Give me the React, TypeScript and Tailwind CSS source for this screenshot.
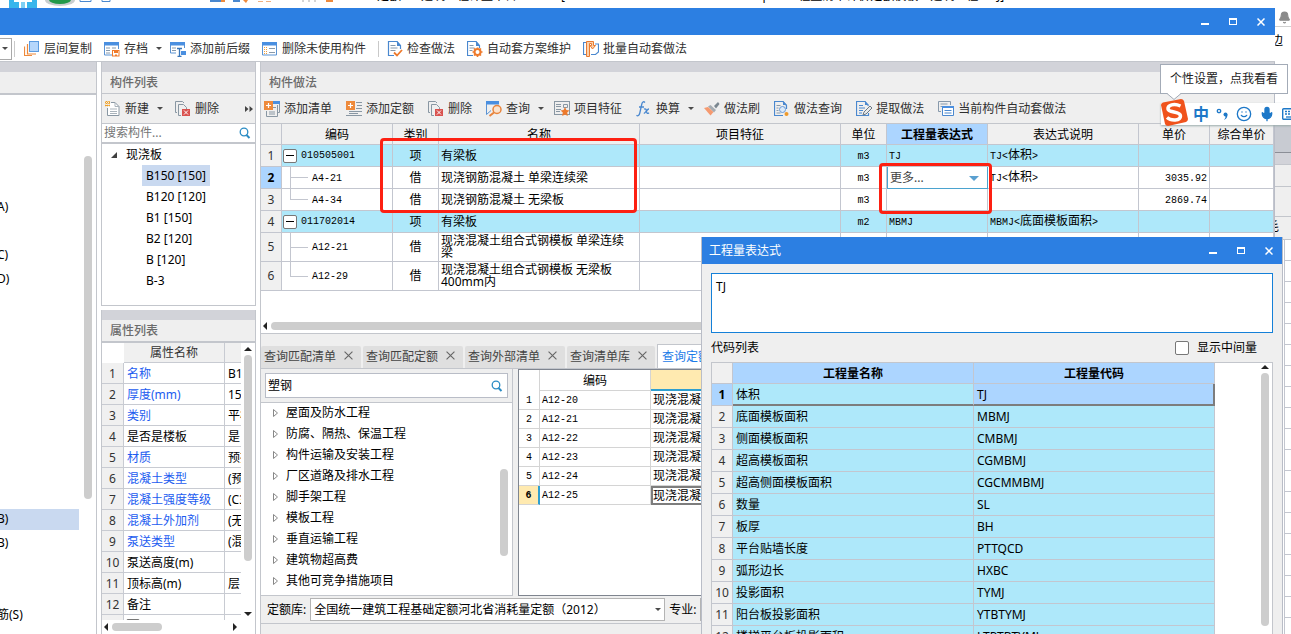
import { useState } from "react";
import type { ReactNode } from "react";
import { Bell, Mic, Smile } from "lucide-react";

const outlineRows = ["", "", "A)", "", "C)", "D)", "", "", "", "", "", "", "", "", "", "B)", "B)", "", "", "筋(S)"];

const members = ["B150 [150]", "B120 [120]", "B1 [150]", "B2 [120]", "B [120]", "B-3"];

const properties = [
  { name: "名称", value: "B1", link: true },
  { name: "厚度(mm)", value: "15", link: true },
  { name: "类别", value: "平板", link: true },
  { name: "是否是楼板", value: "是", link: false },
  { name: "材质", value: "预拌", link: true },
  { name: "混凝土类型", value: "(预", link: true },
  { name: "混凝土强度等级", value: "(C3", link: true },
  { name: "混凝土外加剂", value: "(无", link: true },
  { name: "泵送类型", value: "(混", link: true },
  { name: "泵送高度(m)", value: "", link: false },
  { name: "顶标高(m)", value: "层", link: false },
  { name: "备注", value: "", link: false },
];

const methods = [
  { code: "010505001", kind: "项", name: "有梁板", unit: "m3", expr: "TJ", note: ["TJ", "体积"], price: "", group: true },
  { code: "A4-21", kind: "借", name: "现浇钢筋混凝土 单梁连续梁", unit: "m3", expr: "", note: ["TJ", "体积"], price: "3035.92", group: false },
  { code: "A4-34", kind: "借", name: "现浇钢筋混凝土 无梁板", unit: "m3", expr: "", note: [], price: "2869.74", group: false, last: true },
  { code: "011702014", kind: "项", name: "有梁板", unit: "m2", expr: "MBMJ", note: ["MBMJ", "底面模板面积"], price: "", group: true },
  { code: "A12-21", kind: "借", name: "现浇混凝土组合式钢模板 单梁连续梁", unit: "", expr: "", note: [], price: "", group: false, tall: true },
  { code: "A12-29", kind: "借", name: "现浇混凝土组合式钢模板 无梁板 400mm内", unit: "", expr: "", note: [], price: "", group: false, tall: true, last: true },
];

const chapters = [
  "屋面及防水工程",
  "防腐、隔热、保温工程",
  "构件运输及安装工程",
  "厂区道路及排水工程",
  "脚手架工程",
  "模板工程",
  "垂直运输工程",
  "建筑物超高费",
  "其他可竞争措施项目",
];

const quotas = ["A12-20", "A12-21", "A12-22", "A12-23", "A12-24", "A12-25"];

const tabs = ["查询匹配清单", "查询匹配定额", "查询外部清单", "查询清单库"];

const codes = [
  ["体积", "TJ"],
  ["底面模板面积", "MBMJ"],
  ["侧面模板面积", "CMBMJ"],
  ["超高模板面积", "CGMBMJ"],
  ["超高侧面模板面积", "CGCMMBMJ"],
  ["数量", "SL"],
  ["板厚", "BH"],
  ["平台贴墙长度", "PTTQCD"],
  ["弧形边长", "HXBC"],
  ["投影面积", "TYMJ"],
  ["阳台板投影面积", "YTBTYMJ"],
  ["楼梯平台板投影面积", "LTPTBTYMJ"],
];

function Svg({ children }: { children: ReactNode }) {
  return (
    <svg width="16" height="16" viewBox="0 0 16 16" fill="none" className="shrink-0" aria-hidden>
      {children}
    </svg>
  );
}

const icons = {
  copy: (
    <Svg>
      <rect x="5.5" y=".5" width="9" height="10" fill="#b5d6fb" stroke="#5b9be0" />
      <path d="M3.5 3v10H12M.5 5.500v9H8" stroke="#ee8a3c" strokeWidth="1.200" />
    </Svg>
  ),
  archive: (
    <Svg>
      <path d="M.5 1v13H9M14.500 1v7" stroke="#5b93d3" />
      <path d="M0 1h15v3.500H0z" fill="#4a8fe0" />
      <path d="M2 7h4M2 9.500h4M2 12h4M8 7h4" stroke="#8799ab" />
      <rect x="8.500" y="9.500" width="6.500" height="5.500" fill="#fff" stroke="#f07a2a" />
      <path d="M10 10h4v2h-4zM11 13.500h2V15h-2z" fill="#f07a2a" />
    </Svg>
  ),
  affix: (
    <Svg>
      <path d="M.5 1v11H6M14.500 1v6" stroke="#5b93d3" />
      <path d="M0 1h15v3.500H0zM11 10h5v4h-5z" fill="#4a8fe0" />
      <path d="M2 7h4M2 9.500h4" stroke="#8799ab" />
      <path d="M7 7.500h5M9.500 7.500v8M7.500 15.500h4" stroke="#3975b8" strokeWidth="1.300" />
    </Svg>
  ),
  unused: (
    <Svg>
      <path d="M.5 2v12h14V2" stroke="#5b93d3" />
      <path d="M0 1h15v3.500H0z" fill="#4a8fe0" />
      <path d="M2.500 6v7M4.500 6v7" stroke="#f0a040" strokeDasharray="1 1" />
      <path d="M7 7.500h6M7 11.500h6" stroke="#8799ab" />
    </Svg>
  ),
  check: (
    <Svg>
      <path d="M13.500 8V4.500L10 .5H1.500v14H7" stroke="#4a88cf" strokeWidth="1.200" />
      <path d="M10 0v5h4z" fill="#4a88cf" />
      <path d="M3.500 4.500h5M3.500 7h7M3.500 9.500h5" stroke="#8799ab" />
      <path d="M7 11.500l3 3 5-5.500" stroke="#ee7a2c" strokeWidth="1.800" />
    </Svg>
  ),
  plan: (
    <Svg>
      <path d="M12.500 7V4.500L9 .5H.5v14H6" stroke="#4a88cf" strokeWidth="1.200" />
      <path d="M9 0v5h4z" fill="#4a88cf" />
      <path d="M2.500 4.500h4M2.500 7h5M2.500 9.500h3" stroke="#8799ab" />
      <circle cx="10.500" cy="11" r="3" stroke="#ee7a2c" strokeWidth="2" />
      <path d="M10.500 6.500v1M10.500 14.500v1.500M5.500 11h1.500M14 11h1.500M7 7.500l1 1M13 13.500l1 1M14 7.500l-1 1M8 13.500l-1 1" stroke="#ee7a2c" strokeWidth="1.600" />
    </Svg>
  ),
  batch: (
    <Svg>
      <path d="M4 1.500H.5v12H3M12 3h3.500v8L12.500 13.500H8" stroke="#4a88cf" strokeWidth="1.200" />
      <path d="M3.500.500h7v4h2L9.500 8 7 4.500h1.500v-2h-2v13h-3z" fill="#f9d0ad" stroke="#e97a30" />
    </Svg>
  ),
  create: (
    <Svg>
      <path d="M6 1.500h4l4 4v9H2.500V7" fill="#fff" stroke="#8997a3" />
      <path d="M10 1.500v4h4M5 8h7M5 10.500h7M5 12.500h7" stroke="#a9b3bb" />
      <path d="M0 1.500h5M0 4.500h5M1.500 0v6M4 0v6" stroke="#f0a024" strokeDasharray="1 1" strokeWidth="1.400" />
    </Svg>
  ),
  remove: (
    <Svg>
      <path d="M2 11.500H.5V.5h7L9 2M6 14.500H3.500v-11h5l3 3V8" stroke="#8997a3" />
      <rect x="7" y="8" width="8" height="7" fill="#d9524f" />
      <path d="M9 9.500l4 4M13 9.500l-4 4" stroke="#fff" />
    </Svg>
  ),
  addList: (
    <Svg>
      <path d="M9 1h6.500v10.500H14M13.500 4v11.500h-11V10" stroke="#8997a3" />
      <path d="M9 0h7v3H9z" fill="#4a8fe0" />
      <path d="M9 6.500h3M5 11h6M5 13h6" stroke="#8997a3" />
      <path d="M0 0h9v9H0z" fill="#ee8a3c" />
      <path d="M4.500 2v5M2 4.500h5" stroke="#fff" strokeWidth="1.200" />
    </Svg>
  ),
  addQuota: (
    <Svg>
      <path d="M10 1.500h6M11 4.500h5M10 7.500h6M3 10.500h13M3 12.500h9M0 14.500h16" stroke="#8997a3" />
      <path d="M0 0h9v9H0z" fill="#ee8a3c" />
      <path d="M4.500 2v5M2 4.500h5" stroke="#fff" strokeWidth="1.200" />
    </Svg>
  ),
  query: (
    <Svg>
      <path d="M.5 1v12.500L5 9.500" stroke="#5b93d3" />
      <path d="M0 0h13v3.500H0z" fill="#4a8fe0" />
      <circle cx="11" cy="8.500" r="4" fill="#fbe3cd" stroke="#e8843c" strokeWidth="1.500" />
      <path d="M8 11.500L3.500 15" stroke="#e8843c" strokeWidth="2" />
    </Svg>
  ),
  feature: (
    <Svg>
      <rect x=".5" y=".5" width="15" height="13" stroke="#8997a3" />
      <path d="M2 3.500h5M2 5.500h5M2 8.500h5M2 10.500h4M9.500 3.500h4v3h-4z" stroke="#8997a3" />
      <path d="M11 6l1.400 3 3.100.400-2.300 2.200.600 3.300-2.800-1.500-2.800 1.500.600-3.300-2.300-2.200L9.600 9z" fill="#ee7a2c" />
    </Svg>
  ),
  fx: (
    <Svg>
      <path
        d="M9 1.500C7.500 0 6.200 1 5.700 3.500L3.800 12c-.5 2.500-2 3.500-3.300 2.300M3 6h5M8 8.200c2-1 2.200.5 2.500 2.200s.8 2.800 2.500 1.300M13 8c-1.800-.2-3.200 3.800-5.200 4.500"
        stroke="#4a88cf"
        strokeWidth="1.300"
      />
    </Svg>
  ),
  brush: (
    <Svg>
      <path d="M6.500 4l5.500 5-2 2.500-6-6z" fill="#a5acb2" />
      <path d="M10 5l4-4 1.500 2L12 7.500z" fill="#7b8790" />
      <path d="M4 6l5.500 5-3 3.500L0 7z" fill="#f59a70" />
    </Svg>
  ),
  methodQuery: (
    <Svg>
      <path d="M12.500 8V4.500L9 .5H.5v14H9" stroke="#4a88cf" strokeWidth="1.200" />
      <path d="M9 0v4h4z" fill="#4a88cf" />
      <path d="M2.500 4.500h4M2.500 7h2M2.500 9.500h2M2.500 12h4" stroke="#8799ab" />
      <circle cx="8.500" cy="8.500" r="3" fill="#dbeafa" stroke="#6798d4" />
      <circle cx="12.500" cy="13" r="2" fill="#ee9a2c" />
    </Svg>
  ),
  extract: (
    <Svg>
      <path d="M12.500 5L9 .5H.5v14H12.500V12" stroke="#4a88cf" strokeWidth="1.200" />
      <path d="M9 0v4h4z" fill="#4a88cf" />
      <path d="M3 4.500h4M3 7h6M3 9.500h4M3 12h3" stroke="#4a88cf" />
      <path d="M14 5l2 2-6 6-3 1 1-3z" fill="#e8eaec" stroke="#6d7a85" />
    </Svg>
  ),
  current: (
    <Svg>
      <path d="M3 10.500H.5V.5h12V4M2.500 3h7M2.500 5.500H4" stroke="#8799ab" />
      <path d="M4.500 5.500h11v9h-11z" fill="#fff" stroke="#4a88cf" />
      <path d="M4 5h12v2H4z" fill="#4a8fe0" />
      <path d="M6.500 9.500h7M6.500 12h7" stroke="#4a88cf" />
    </Svg>
  ),
};

type IconName = keyof typeof icons;

function Arrow() {
  return <span className="-mr-1 ml-1 h-0 w-1.5 border-x-3 border-t-3 border-x-transparent border-t-[#4a4a4a]" />;
}

function ToolButton({ icon, label, menu }: { icon: IconName; label: string; menu?: boolean }) {
  return (
    <button type="button" className="flex shrink-0 items-center gap-1 whitespace-nowrap text-[#2f2f2f]">
      {icons[icon]}
      {label}
      {menu && <Arrow />}
    </button>
  );
}

function WindowButtons() {
  return (
    <div className="flex items-center gap-4 pr-2 text-white">
      <button type="button" aria-label="最小化" className="flex h-3 w-3 items-center justify-center">
        <span className="mt-1 h-0.5 w-2 bg-white" />
      </button>
      <button type="button" aria-label="最大化" className="flex h-3 w-3 items-center justify-center">
        <span className="h-[7px] w-2 border border-t-2 border-white" />
      </button>
      <button type="button" aria-label="关闭" className="flex h-3 w-3 items-center justify-center">
        <svg width="8" height="8" viewBox="0 0 8 8" aria-hidden>
          <path d="M.5.5l7 7M7.500.5l-7 7" stroke="#fff" strokeWidth="1.500" />
        </svg>
      </button>
    </div>
  );
}

function PanelHead({ title }: { title: string }) {
  return (
    <>
      <div className="h-2.5 shrink-0 bg-[#d2d3d9]" />
      <h2 className="flex h-[22px] shrink-0 items-center border-b border-[#c3c6cc] bg-[#efefef] pl-2 font-medium text-[#6b6b6b]">
        {title}
      </h2>
    </>
  );
}

function SearchIcon() {
  return (
    <svg width="12" height="12" viewBox="0 0 12 12" fill="none" aria-hidden className="shrink-0">
      <circle cx="5" cy="5" r="3.800" stroke="#2b8cc4" strokeWidth="1.300" />
      <path d="M7.500 8l3 3" stroke="#2b8cc4" strokeWidth="2" />
    </svg>
  );
}

const Mono = ({ children }: { children: ReactNode }) => (
  <span className="font-['Liberation_Mono',monospace] text-[10px]">{children}</span>
);

function OutlinePane() {
  return (
    <aside className="flex w-[97px] shrink-0 flex-col border-r border-[#c3c6cc] bg-white">
      <div className="h-2.5 shrink-0 bg-[#d2d3d9]" />
      <div className="h-[23px] shrink-0 border-b-2 border-[#c3c6cc] bg-[#efefef]" />
      <div className="flex min-h-0 flex-1 justify-between pr-1">
        <ul className="w-[79px] pt-[52px]">
          {outlineRows.map((row, i) => (
            <li key={i} className="flex h-6 items-center">
              <span className={i === 15 ? "flex h-[21px] w-full items-center bg-[#c9d9f0]" : "flex h-[21px] w-full items-center"}>
                <span className="-ml-[3px]">{row}</span>
              </span>
            </li>
          ))}
        </ul>
        <div className="mt-[61px] h-[343px] w-2 rounded-full bg-[#cdcdcd]" />
      </div>
    </aside>
  );
}

function MemberPanel() {
  return (
    <section className="flex h-[244px] shrink-0 flex-col border border-t-0 border-[#c3c6cc] bg-white">
      <PanelHead title="构件列表" />
      <div className="flex h-[30px] shrink-0 items-center gap-4 border-b border-[#c3c6cc] bg-[#efefef] pr-1 pl-[3px]">
        <ToolButton icon="create" label="新建" menu />
        <ToolButton icon="remove" label="删除" />
        <button type="button" aria-label="更多" className="-mr-0.5 ml-auto">
          <svg width="8" height="6" viewBox="0 0 8 6" fill="#444" aria-hidden>
            <path d="M0 0l3.500 3L0 6zM4.500 0L8 3 4.500 6z" />
          </svg>
        </button>
      </div>
      <label className="flex h-5 shrink-0 items-center border-b-2 border-[#c3c6cc] pr-1 pl-0.5">
        <input aria-label="搜索构件" placeholder="搜索构件..." className="min-w-0 flex-1 outline-none placeholder:text-[#757575]" />
        <SearchIcon />
      </label>
      <div className="flex h-[21px] items-center gap-2 pl-2">
        <svg width="8" height="8" viewBox="0 0 8 8" aria-hidden>
          <path d="M7 1v6H1z" fill="#404040" />
        </svg>
        现浇板
      </div>
      <ul className="pl-10">
        {members.map((member, i) => (
          <li key={member} className="flex h-[21px]">
            <button type="button" className={i === 0 ? "bg-[#c9d9f0] px-1" : "px-1"}>
              {member}
            </button>
          </li>
        ))}
      </ul>
    </section>
  );
}

function PropertyPanel() {
  return (
    <section className="flex min-h-0 flex-1 flex-col border-x border-[#c3c6cc] bg-white">
      <PanelHead title="属性列表" />
      <div className="flex min-h-0 flex-1 border-t border-[#c3c6cc]">
        <div className="min-w-0 flex-1 overflow-hidden">
          <table className="w-full table-fixed border-separate border-spacing-0">
            <colgroup>
              <col className="w-[22px]" />
              <col className="w-[101px]" />
              <col />
            </colgroup>
            <thead>
              <tr className="h-5">
                <th className="p-0" />
                <th className="border-r border-b border-[#c8cbd2] bg-[#f0f0f0] p-0 pt-px font-normal text-[#333]">属性名称</th>
                <th className="border-b border-[#c8cbd2] bg-[#f0f0f0] p-0" />
              </tr>
            </thead>
            <tbody>
              {properties.map((row, i) => (
                <tr key={row.name} className="h-[21px]">
                  <th className="border-r border-b border-[#c8cbd2] bg-[#f0f0f0] p-0 pt-px font-normal text-[#333]">{i + 1}</th>
                  <td
                    className={
                      row.link
                        ? "border-r border-b border-[#c8cbd2] p-0 pt-px pl-[3px] whitespace-nowrap text-[#1c5cf0]"
                        : "border-r border-b border-[#c8cbd2] p-0 pt-px pl-[3px] whitespace-nowrap"
                    }
                  >
                    {row.name}
                  </td>
                  <td className="overflow-hidden border-b border-[#c8cbd2] p-0 pt-px pl-[3px] whitespace-nowrap">{row.value}</td>
                </tr>
              ))}
              <tr className="h-[21px]">
                <th className="border-r border-[#c8cbd2] bg-[#f0f0f0] p-0" />
                <td className="border-r border-[#c8cbd2] p-0 pl-0.5">
                  <button type="button" aria-label="展开" className="block h-3.5 w-3.5 rounded-xs border border-[#777] bg-white" />
                </td>
                <td className="p-0" />
              </tr>
            </tbody>
          </table>
        </div>
        <div className="flex w-3.5 flex-col items-center py-1">
          <span className="h-0 w-0 border-x-4 border-b-4 border-x-transparent border-b-[#222]" />
          <span className="mt-1 h-[206px] w-2 rounded-full bg-[#cdcdcd]" />
          <span className="mt-auto h-0 w-0 border-x-4 border-t-4 border-x-transparent border-t-[#222]" />
        </div>
      </div>
      <div className="flex h-[14px] shrink-0 items-center px-0.5">
        <span className="h-0 w-0 border-y-4 border-r-4 border-y-transparent border-r-[#222]" />
        <span className="ml-1 h-2 w-[50px] rounded-full bg-[#cdcdcd]" />
        <span className="mr-4 ml-auto h-0 w-0 border-y-4 border-l-4 border-y-transparent border-l-[#222]" />
      </div>
    </section>
  );
}

const cell = "border-r border-b border-[#c3c6cf] p-0";

function MethodTable() {
  const headers = ["编码", "类别", "名称", "项目特征", "单位", "工程量表达式", "表达式说明", "单价", "综合单价"];
  return (
    <div className="relative h-[210px] shrink-0 border-b border-[#c3c6cc] bg-white">
      <table className="w-full table-fixed border-separate border-spacing-0">
        <colgroup>
          <col className="w-[21px]" />
          <col className="w-[111px]" />
          <col className="w-[46px]" />
          <col className="w-[201px]" />
          <col className="w-[201px]" />
          <col className="w-[46px]" />
          <col className="w-[101px]" />
          <col className="w-[151px]" />
          <col className="w-[71px]" />
          <col />
        </colgroup>
        <thead>
          <tr className="h-[21px] bg-[#f0f0f0]">
            <th className={cell} />
            {headers.map((header) => (
              <th
                key={header}
                className={
                  header === "工程量表达式"
                    ? "border-r border-b border-[#c3c6cf] bg-[#acd5ff] p-0 pt-px font-bold"
                    : "border-r border-b border-[#c3c6cf] p-0 pt-px font-normal whitespace-nowrap"
                }
              >
                {header}
              </th>
            ))}
          </tr>
        </thead>
        <tbody>
          {methods.map((row, i) => (
            <tr key={row.code} className={row.tall ? "h-[29px]" : row.group ? "h-[22px] bg-[#aee8fa]" : "h-[22px]"}>
              <th
                className={
                  i === 1
                    ? "border-r border-b border-[#c3c6cf] bg-[#acd5ff] p-0 font-bold"
                    : "border-r border-b border-[#c3c6cf] bg-[#f0f0f0] p-0 font-normal text-[#333]"
                }
              >
                {i + 1}
              </th>
              <td className={cell}>
                {row.group ? (
                  <div className="flex items-center gap-1 pl-px">
                    <button
                      type="button"
                      aria-label="折叠"
                      className="flex h-3.5 w-3.5 items-center justify-center rounded-xs border border-[#777] bg-white"
                    >
                      <span className="h-px w-2 bg-black" />
                    </button>
                    <Mono>{row.code}</Mono>
                  </div>
                ) : (
                  <div className="flex items-center pl-2">
                    <span className={row.tall ? "flex h-7 w-[18px] flex-col" : "flex h-[21px] w-[18px] flex-col"}>
                      <span className="flex-1 border-b border-l border-[#c3c6cf]" />
                      <span className={row.last ? "flex-1" : "flex-1 border-l border-[#c3c6cf]"} />
                    </span>
                    <span className="ml-1 leading-3">
                      <Mono>{row.code}</Mono>
                    </span>
                  </div>
                )}
              </td>
              <td className="border-r border-b border-[#c3c6cf] p-0 text-center">{row.kind}</td>
              <td className="border-r border-b border-[#c3c6cf] p-0 pr-2.5 pl-0.5 leading-3">{row.name}</td>
              <td className={cell} />
              <td className="border-r border-b border-[#c3c6cf] p-0 text-center">
                <Mono>{row.unit}</Mono>
              </td>
              {i === 1 ? (
                <td className="border border-t-0 border-[#4ba3cf] p-0">
                  <div className="relative">
                    <select aria-label="工程量表达式" className="block h-5 w-full appearance-none pl-0.5 text-[#444] outline-none">
                      <option>更多...</option>
                    </select>
                    <span className="pointer-events-none absolute top-2 right-2 border-x-5 border-t-5 border-x-transparent border-t-[#5aa0d0]" />
                  </div>
                </td>
              ) : (
                <td className="border-r border-b border-[#c3c6cf] p-0 pl-0.5">
                  <Mono>{row.expr}</Mono>
                </td>
              )}
              <td className="border-r border-b border-[#c3c6cf] p-0 pl-0.5 whitespace-nowrap">
                {row.note.length > 0 && (
                  <>
                    <Mono>{row.note[0]}&lt;</Mono>
                    {row.note[1]}
                    <Mono>&gt;</Mono>
                  </>
                )}
              </td>
              <td className="border-r border-b border-[#c3c6cf] p-0 pr-0.5 text-right">
                <Mono>{row.price}</Mono>
              </td>
              <td className={cell} />
            </tr>
          ))}
        </tbody>
      </table>
      <div className="absolute inset-x-0 bottom-0 flex h-3.5 items-center gap-1 pl-0.5">
        <span className="border-y-4 border-r-4 border-y-transparent border-r-[#222]" />
        <span className="h-2 flex-1 rounded-full bg-[#cdcdcd]" />
      </div>
      <div className="absolute top-3.5 left-[119px] h-[75px] w-[257px] rounded-sm border-3 border-[#fd2012]" />
      <div className="absolute top-[39px] left-[618px] h-[51px] w-[113px] rounded-sm border-3 border-[#fd2012]" />
    </div>
  );
}

function QueryArea() {
  const [keyword, setKeyword] = useState("塑钢");

  return (
    <section className="flex min-h-0 flex-1 flex-col bg-[#efefef] pt-2.5">
      <div className="flex h-[25px] shrink-0 items-end gap-0.5 overflow-hidden border-b border-[#c3c6cc]">
        {tabs.map((tab) => (
          <div key={tab} className="flex h-[22px] shrink-0 items-center gap-2 rounded-t-xs bg-[#dfdfdf] pr-2 pl-[3px] text-[#444]">
            <button type="button" className="whitespace-nowrap">
              {tab}
            </button>
            <button type="button" aria-label={`关闭${tab}`} className="mb-1">
              <svg width="9" height="9" viewBox="0 0 8 8" aria-hidden>
                <path d="M.5.5l7 7M7.500.5l-7 7" stroke="#666" />
              </svg>
            </button>
          </div>
        ))}
        <button type="button" className="h-6 shrink-0 border border-b-0 border-[#c3c6cc] bg-white px-1 text-[#1b7be8]">
          查询定额
        </button>
      </div>
      <div className="flex h-[227px] shrink-0 gap-[5px]">
        <div className="flex w-[252px] shrink-0 flex-col border-r border-b border-[#c3c6cc]">
          <label className="m-1 flex h-[25px] shrink-0 items-center border border-[#b9bdc7] bg-white pr-1 pl-0.5">
            <input
              aria-label="查询定额"
              value={keyword}
              onChange={(event) => setKeyword(event.target.value)}
              className="min-w-0 flex-1 outline-none"
            />
            <SearchIcon />
          </label>
          <div className="flex min-h-0 flex-1 justify-between border-t border-[#c3c6cc] bg-white pr-1">
            <ul className="-mt-px">
              {chapters.map((chapter) => (
                <li key={chapter} className="flex h-[21px] items-center gap-2 pl-3">
                  <svg width="5" height="8" viewBox="0 0 5 8" fill="none" aria-hidden>
                    <path d="M.5.5v7L4.500 4z" stroke="#888" />
                  </svg>
                  {chapter}
                </li>
              ))}
            </ul>
            <div className="mt-[66px] h-[87px] w-2 rounded-full bg-[#cdcdcd]" />
          </div>
        </div>
        <div className="min-w-0 flex-1 border border-[#7f858f] bg-white">
          <table className="w-full table-fixed border-separate border-spacing-0">
            <colgroup>
              <col className="w-[21px]" />
              <col className="w-[111px]" />
              <col />
            </colgroup>
            <thead>
              <tr className="h-[21px]">
                <th className="border-r border-[#d4d4d4] p-0" />
                <th className="border-r border-b border-[#d4d4d4] p-0 pt-px font-normal">编码</th>
                <th className="border-b-2 border-[#2f9fd0] bg-[#ffeab0] p-0" />
              </tr>
            </thead>
            <tbody>
              {quotas.map((quota, i) => (
                <tr key={quota} className="h-[19px]">
                  <th
                    className={
                      i === 5
                        ? "border-r-2 border-b border-r-[#2f9fd0] border-b-[#d4d4d4] bg-[#ffeab0] p-0 font-bold leading-4"
                        : "border-r border-b border-[#d4d4d4] p-0 font-normal leading-4"
                    }
                  >
                    <Mono>{i + 1}</Mono>
                  </th>
                  <td className="border-r border-b border-[#d4d4d4] p-0 pl-0.5 leading-4">
                    <Mono>{quota}</Mono>
                  </td>
                  <td
                    className={
                      i === 5
                        ? "border-2 border-[#7d7d7d] p-0 leading-[15px]"
                        : "border-b border-[#d4d4d4] p-0 pl-0.5 leading-4"
                    }
                  >
                    现浇混凝
                  </td>
                </tr>
              ))}
            </tbody>
          </table>
        </div>
      </div>
      <div className="flex h-7 shrink-0 items-center gap-1 border-b border-[#c3c6cc] pl-1.5">
        <label htmlFor="quota-library">定额库:</label>
        <div className="relative">
          <select
            id="quota-library"
            className="block h-[23px] w-[355px] appearance-none border border-[#b4b4b4] bg-white pl-[3px] outline-none"
          >
            <option>全国统一建筑工程基础定额河北省消耗量定额（2012）</option>
          </select>
          <span className="pointer-events-none absolute top-2.5 right-1 border-x-3 border-t-3 border-x-transparent border-t-[#4a4a4a]" />
        </div>
        <label htmlFor="major">专业:</label>
        <select id="major" className="h-[23px] w-40 appearance-none border border-[#b4b4b4] bg-white" />
      </div>
    </section>
  );
}

function ExpressionDialog() {
  const [expression, setExpression] = useState("TJ");

  return (
    <div
      role="dialog"
      aria-label="工程量表达式"
      className="absolute top-[237px] right-2 bottom-0 flex w-[582px] flex-col overflow-hidden border-x border-[#b9bdc7] bg-[#efefef]"
    >
      <div className="-mx-px flex h-[27px] shrink-0 items-center justify-between bg-[#2c7fe2] pl-2 text-white">
        工程量表达式
        <WindowButtons />
      </div>
      <div className="flex min-h-0 flex-1 flex-col px-[9px] pt-[9px]">
        <textarea
          aria-label="表达式"
          value={expression}
          onChange={(event) => setExpression(event.target.value)}
          className="h-[60px] shrink-0 resize-none border border-[#1480d8] bg-white px-1 py-[3px] leading-5 outline-none"
        />
        <div className="flex h-[29px] shrink-0 items-center justify-between pr-4">
          <span>代码列表</span>
          <label className="flex items-center gap-2">
            <input type="checkbox" className="h-3.5 w-3.5 appearance-none rounded-xs border border-[#777] bg-white" />
            显示中间量
          </label>
        </div>
        <div className="flex min-h-0 flex-1 justify-between border border-b-0 border-[#c3c6cc] bg-white">
          <div className="overflow-hidden">
            <table className="w-[503px] table-fixed border-separate border-spacing-0">
              <colgroup>
                <col className="w-[21px]" />
                <col className="w-[241px]" />
                <col className="w-[241px]" />
              </colgroup>
              <thead>
                <tr className="h-[21px] bg-[#acd5ff]">
                  <th className="border-r border-b border-[#c3c6cf] bg-[#f0f0f0] p-0" />
                  <th className="border-r border-b border-[#c3c6cf] p-0 pt-px">工程量名称</th>
                  <th className="border-r border-b border-[#c3c6cf] p-0 pt-px">工程量代码</th>
                </tr>
              </thead>
              <tbody>
                {codes.map(([name, code], i) =>
                  i === 0 ? (
                    <tr key={code} className="h-[22px] bg-[#aee8fa]">
                      <th className="border-r border-b border-[#c3c6cf] bg-[#acd5ff] p-0 pt-px">1</th>
                      <td className="border-r border-b-2 border-r-[#c3c6cf] border-b-[#7d7d7d] p-0 pt-px pl-[3px]">{name}</td>
                      <td className="border-r-2 border-b-2 border-[#7d7d7d] bg-[#acd5ff] p-0 pt-px pl-[3px]">{code}</td>
                    </tr>
                  ) : (
                    <tr key={code} className="h-[22px] bg-[#aee8fa]">
                      <th className="border-r border-b border-[#c3c6cf] bg-[#f0f0f0] p-0 pt-px font-normal text-[#333]">{i + 1}</th>
                      <td className="border-r border-b border-[#c3c6cf] p-0 pl-[3px]">{name}</td>
                      <td className="border-r border-b border-[#c3c6cf] p-0 pl-[3px]">{code}</td>
                    </tr>
                  ),
                )}
              </tbody>
            </table>
          </div>
          <div className="flex w-3.5 flex-col items-center pt-0.5 pb-2">
            <span className="border-x-4 border-b-4 border-x-transparent border-b-[#222]" />
            <span className="mt-1 w-2 flex-1 rounded-full bg-[#cdcdcd]" />
          </div>
        </div>
      </div>
    </div>
  );
}

function InputMethodBar() {
  return (
    <>
      <div className="absolute top-[103px] right-0 flex h-[22px] w-[130px] items-center gap-[7px] overflow-hidden bg-white pl-8 text-[#1d78c8] shadow-[0_1px_2px_#9aa]">
        <span className="w-4 shrink-0 text-center text-base leading-5 font-bold">中</span>
        <svg width="13" height="14" viewBox="0 0 13 14" fill="none" className="shrink-0" aria-hidden>
          <circle cx="3" cy="4" r="1.700" stroke="#1d78c8" strokeWidth="1.300" />
          <circle cx="9.500" cy="7.500" r="2" fill="#1d78c8" />
          <path d="M11.500 7.500q0 4-3.500 5.500 2-2.500 1.500-4z" fill="#1d78c8" />
        </svg>
        <Smile size={16} className="shrink-0" />
        <Mic size={16} className="shrink-0 fill-[#1d78c8]" />
        <svg width="14" height="12" viewBox="0 0 14 12" fill="none" className="shrink-0" aria-hidden>
          <rect x=".7" y=".7" width="12.600" height="10.600" rx="1" stroke="#1d78c8" strokeWidth="1.400" />
          <path d="M3 3.500h8M3 6h8" stroke="#1d78c8" strokeWidth="1.300" strokeDasharray="2 1" />
          <path d="M4 9h6" stroke="#1d78c8" strokeWidth="1.300" />
        </svg>
      </div>
      <svg width="28" height="28" viewBox="0 0 28 28" className="absolute top-[98px] right-[103px]" aria-hidden>
        <path d="M1 7q0-2 2-2.500L21 1q2 0 3 2l4 18q0 2-2 3L8 28q-2 0-3-2z" fill="#f0531c" />
        <path d="M20.500 8C14 5 7.500 7 8 11s12.500 2 12.500 7S11 23 7 19.500" fill="none" stroke="#fff" strokeWidth="3.500" />
      </svg>
      <div className="absolute top-16 right-[3px] flex h-[30px] w-32 items-center justify-center border border-[#a3abb7] bg-white text-[#222]">
        个性设置，点我看看
        <svg width="14" height="8" viewBox="0 0 14 8" className="absolute top-7 left-1.5" aria-hidden>
          <path d="M0 0l7 6 7-6z" fill="#fff" />
          <path d="M0 .5l7 6 7-6" fill="none" stroke="#a3abb7" />
        </svg>
      </div>
    </>
  );
}

function BackdropEdge() {
  return (
    <div className="flex w-4 shrink-0 flex-col overflow-hidden bg-white">
      <div className="flex h-[19px] shrink-0 items-center justify-end border-b border-[#d0d0d0] text-[#8a8a8a]">
        <Bell size={13} className="shrink-0 fill-[#8a8a8a]" />
      </div>
      <div className="h-[30px] shrink-0 pt-1 leading-5">
        <span className="-ml-1">边</span>
      </div>
      <div className="h-[60px] shrink-0 bg-white" />
      <div className="h-9 shrink-0 border-b border-[#8b8e96] bg-[#c8cbd2]" />
      <div className="h-[11px] shrink-0 bg-[#d2d3d9]" />
      <div className="h-[23px] shrink-0 border-y border-[#c3c6cc] bg-[#efefef]" />
      <div className="h-[30px] shrink-0 border-b border-[#c3c6cc] bg-[#efefef]" />
      <div className="h-[23px] shrink-0 border-b border-[#c3c6cc] bg-[#efefef] leading-5">
        <span className="-ml-2">毛</span>
      </div>
      {Array.from({ length: 19 }, (_, i) => (
        <div key={i} className="ml-[9px] h-[21px] shrink-0 border-b border-l border-[#c3c6cf]" />
      ))}
    </div>
  );
}

function BackdropTop() {
  return (
    <div className="flex h-2 shrink-0 items-end overflow-hidden bg-white pl-[9px]">
      <svg width="340" height="8" viewBox="0 0 340 8" className="shrink-0" aria-hidden>
        <path d="M0 0h28v8H0z" fill="#38b5ec" />
        <path d="M5 0h18v2h-5v6h-8V2H5z" fill="#fff" />
        <path d="M12 2h4v6h-4z" fill="#7fd0f4" />
        <ellipse cx="51" cy="0" rx="15" ry="6" fill="#c9ced0" />
        <ellipse cx="51" cy="0" rx="11" ry="4" fill="#22994a" />
        <path d="M71 0v1.500h11V0M93 0v1.500h8V0" stroke="#4a88cf" fill="none" />
        <path d="M201 0h12v2h-12zM224 0h7v2h-7z" fill="#4a88cf" />
        <path d="M212 0h4v2h-4zM234 0h5l-2 3zM317 0h7v2h-7z" fill="#ee8a3c" />
        <path d="M249 1.500h5M257 1.500h5" stroke="#f0b080" />
        <path d="M294 0v2M300 0v2M306 0v2" stroke="#aaa" />
      </svg>
      <div className="flex shrink-0 gap-3 pb-1.5 pl-7 leading-none whitespace-nowrap">
        <span>定额</span>
        <span className="ml-2">建筑工程计量平台</span>
        <span className="ml-8">[C:\Users</span>
        <span>\Administrator</span>
        <span>\Desktop\</span>
        <span>工程量清单计价定额模板</span>
        <span>建筑工程.GTJ]</span>
      </div>
    </div>
  );
}

export default function App() {
  return (
    <div className="relative flex h-screen flex-col overflow-hidden bg-white font-['Noto_Sans','Noto_Sans_CJK_SC',sans-serif] text-xs text-black">
      <BackdropTop />
      <div className="flex min-h-0 flex-1">
        <main className="flex min-w-0 flex-1 flex-col bg-white">
          <header className="flex h-[27px] shrink-0 items-center justify-end bg-[#2c7fe2]">
            <WindowButtons />
          </header>
          <div className="flex h-[27px] shrink-0 items-center gap-3 border-b border-[#c3c6cc] pt-px">
            <button type="button" aria-label="楼层" className="flex h-[22px] w-3 items-center border border-l-0 border-[#a9a9a9] pl-0.5">
              <span className="border-x-3 border-t-3 border-x-transparent border-t-[#4a4a4a]" />
            </button>
            <span className="-mr-[3px] -ml-2.5 h-4 w-px bg-[#c9c9c9]" />
            <ToolButton icon="copy" label="层间复制" />
            <ToolButton icon="archive" label="存档" menu />
            <ToolButton icon="affix" label="添加前后缀" />
            <ToolButton icon="unused" label="删除未使用构件" />
            <span className="-mr-1 h-4 w-px bg-[#c9c9c9]" />
            <ToolButton icon="check" label="检查做法" />
            <ToolButton icon="plan" label="自动套方案维护" />
            <ToolButton icon="batch" label="批量自动套做法" />
          </div>
          <div className="flex min-h-0 flex-1 gap-1 border-r border-[#b9bdc7]">
            <OutlinePane />
            <div className="flex w-[155px] shrink-0 flex-col gap-1">
              <MemberPanel />
              <PropertyPanel />
            </div>
            <div className="flex min-w-0 flex-1 flex-col border-l border-[#c3c6cc]">
              <PanelHead title="构件做法" />
              <div className="flex h-[30px] shrink-0 items-center gap-3.5 border-b border-[#c3c6cc] bg-[#efefef] pl-[3px]">
                <ToolButton icon="addList" label="添加清单" />
                <ToolButton icon="addQuota" label="添加定额" />
                <ToolButton icon="remove" label="删除" />
                <ToolButton icon="query" label="查询" menu />
                <ToolButton icon="feature" label="项目特征" />
                <ToolButton icon="fx" label="换算" menu />
                <ToolButton icon="brush" label="做法刷" />
                <ToolButton icon="methodQuery" label="做法查询" />
                <ToolButton icon="extract" label="提取做法" />
                <ToolButton icon="current" label="当前构件自动套做法" />
              </div>
              <MethodTable />
              <QueryArea />
            </div>
          </div>
        </main>
        <BackdropEdge />
      </div>
      <ExpressionDialog />
      <InputMethodBar />
    </div>
  );
}
